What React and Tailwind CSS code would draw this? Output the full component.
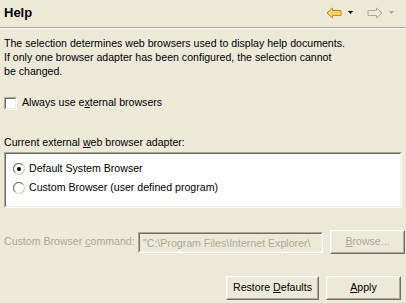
import React from "react";

const font = { fontFamily: "'Liberation Sans', Arial, sans-serif" };

const Sunken = ({ className = "", children }) => (
  <div className={`border border-t-[#aca899] border-l-[#aca899] border-b-white border-r-white ${className}`}>
    <div className="border border-t-[#716f64] border-l-[#716f64] border-b-[#f1efe2] border-r-[#f1efe2] h-full">
      {children}
    </div>
  </div>
);

const Button = ({ children, disabled, className = "" }) => (
  <div className={`border border-t-white border-l-white border-b-[#716f64] border-r-[#716f64] shrink-0 ${className}`}>
    <div className={`h-[22px] flex items-center justify-center border border-t-[#f1efe2] border-l-[#f1efe2] border-b-[#aca899] border-r-[#aca899] whitespace-nowrap ${disabled ? "text-[#aca899]" : "text-black"}`}>
      {children}
    </div>
  </div>
);

const Radio = ({ checked }) => (
  <svg width="12" height="12" viewBox="0 0 12 12">
    <circle cx="6" cy="6" r="5.5" fill="#fff" stroke="#aca899" />
    <path d="M2 9.5 A5 5 0 0 1 9.5 2" fill="none" stroke="#716f64" />
    <path d="M3 10.5 A5 5 0 0 0 10.5 3" fill="none" stroke="#f1efe2" />
    {checked && <circle cx="6" cy="6" r="2" fill="#000" />}
  </svg>
);

const Arrow = ({ color, stroke, flip }) => (
  <svg width="16" height="12" viewBox="0 0 16 12" style={flip ? { transform: "scaleX(-1)" } : undefined}>
    <path d="M1 6 L6.5 1 L6.5 3.5 L15 3.5 L15 8.5 L6.5 8.5 L6.5 11 Z" fill={color} stroke={stroke} strokeLinejoin="round" />
  </svg>
);

const Tri = ({ color }) => (
  <svg width="5" height="3" viewBox="0 0 5 3">
    <path d="M0 0 H5 L2.5 3 Z" fill={color} />
  </svg>
);

export default function App() {
  return (
    <div className="w-[406px] h-[303px] bg-[#ece9d8] text-[10.6px] text-black overflow-hidden" style={font}>
      <div className="h-[28px] flex items-center justify-between pl-[4px] pr-[12px] border-b border-[#aca899]">
        <span className="text-[13px] font-bold pb-[2px]">Help</span>
        <div className="flex items-center gap-[6px] pb-[2px]">
          <Arrow color="#fcd46a" stroke="#c98a16" />
          <Tri color="#000" />
          <div className="w-[2px]" />
          <Arrow color="#ece9d8" stroke="#aca899" flip />
          <Tri color="#aca899" />
        </div>
      </div>
      <div className="border-t border-white px-[4px]">
        <p className="mt-[7px] leading-[14px] whitespace-nowrap">
          The selection determines web browsers used to display help documents.<br />
          If only one browser adapter has been configured, the selection cannot<br />
          be changed.
        </p>
        <label className="mt-[18px] flex items-center gap-[5px] h-[14px]">
          <Sunken className="w-[13px] h-[13px] bg-white" />
          <span>
            Always use e<u>x</u>ternal browsers
          </span>
        </label>
        <div className="mt-[25px] leading-[14px]">
          Current external <u>w</u>eb browser adapter:
        </div>
        <Sunken className="mt-[3px] h-[56px] bg-white">
          <div className="pl-[7px] pt-[8px] flex flex-col gap-[6px]">
            <div className="flex items-center gap-[4px] h-[13px]">
              <Radio checked />
              <span>Default System Browser</span>
            </div>
            <div className="flex items-center gap-[4px] h-[13px]">
              <Radio />
              <span>Custom Browser (user defined program)</span>
            </div>
          </div>
        </Sunken>
        <div className="mt-[22px] flex items-center">
          <span className="text-[#aca899] w-[134px] shrink-0 whitespace-nowrap">
            Custom Browser <u>c</u>ommand:
          </span>
          <Sunken className="w-[185px] h-[21px] bg-[#ece9d8] shrink-0 overflow-hidden">
            <div className="pl-[3px] pt-[2px] text-[#aca899] whitespace-nowrap overflow-hidden">
              "C:\Program Files\Internet Explorer\
            </div>
          </Sunken>
          <Button disabled className="ml-[7px] w-[75px]">
            <span>
              <u>B</u>rowse...
            </span>
          </Button>
        </div>
        <div className="mt-[22px] flex justify-end gap-[7px] pr-[1px]">
          <Button className="w-[93px]">
            <span>
              Restore <u>D</u>efaults
            </span>
          </Button>
          <Button className="w-[75px]">
            <span>
              <u>A</u>pply
            </span>
          </Button>
        </div>
      </div>
    </div>
  );
}
